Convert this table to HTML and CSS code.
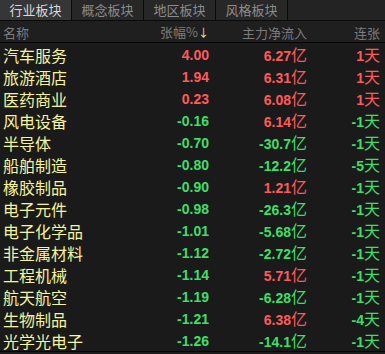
FILE: index.html
```html
<!DOCTYPE html>
<html lang="zh">
<head>
<meta charset="utf-8">
<link rel="stylesheet" href="styles.css">
</head>
<body>
<div class="app">
  <div class="tabs">
    <div class="tab active">行业板块</div>
    <div class="tab">概念板块</div>
    <div class="tab">地区板块</div>
    <div class="tab">风格板块</div>
  </div>
  <div class="row head">
    <div class="name">名称</div>
    <div class="num">张幅%<span class="arrow">↓</span></div>
    <div class="num">主力净流入</div>
    <div class="num">连张</div>
  </div>
  <div class="list">
    <div class="row"><div class="name">汽车服务</div><div class="num up">4.00</div><div class="num up">6.27<span class="cn">亿</span></div><div class="num up">1<span class="cn">天</span></div></div>
    <div class="row"><div class="name">旅游酒店</div><div class="num up">1.94</div><div class="num up">6.31<span class="cn">亿</span></div><div class="num up">1<span class="cn">天</span></div></div>
    <div class="row"><div class="name">医药商业</div><div class="num up">0.23</div><div class="num up">6.08<span class="cn">亿</span></div><div class="num up">1<span class="cn">天</span></div></div>
    <div class="row"><div class="name">风电设备</div><div class="num down">-0.16</div><div class="num up">6.14<span class="cn">亿</span></div><div class="num down">-1<span class="cn">天</span></div></div>
    <div class="row"><div class="name">半导体</div><div class="num down">-0.70</div><div class="num down">-30.7<span class="cn">亿</span></div><div class="num down">-1<span class="cn">天</span></div></div>
    <div class="row"><div class="name">船舶制造</div><div class="num down">-0.80</div><div class="num down">-12.2<span class="cn">亿</span></div><div class="num down">-5<span class="cn">天</span></div></div>
    <div class="row"><div class="name">橡胶制品</div><div class="num down">-0.90</div><div class="num up">1.21<span class="cn">亿</span></div><div class="num down">-1<span class="cn">天</span></div></div>
    <div class="row"><div class="name">电子元件</div><div class="num down">-0.98</div><div class="num down">-26.3<span class="cn">亿</span></div><div class="num down">-1<span class="cn">天</span></div></div>
    <div class="row"><div class="name">电子化学品</div><div class="num down">-1.01</div><div class="num down">-5.68<span class="cn">亿</span></div><div class="num down">-1<span class="cn">天</span></div></div>
    <div class="row"><div class="name">非金属材料</div><div class="num down">-1.12</div><div class="num down">-2.72<span class="cn">亿</span></div><div class="num down">-1<span class="cn">天</span></div></div>
    <div class="row"><div class="name">工程机械</div><div class="num down">-1.14</div><div class="num up">5.71<span class="cn">亿</span></div><div class="num down">-1<span class="cn">天</span></div></div>
    <div class="row"><div class="name">航天航空</div><div class="num down">-1.19</div><div class="num down">-6.28<span class="cn">亿</span></div><div class="num down">-1<span class="cn">天</span></div></div>
    <div class="row"><div class="name">生物制品</div><div class="num down">-1.21</div><div class="num up">6.38<span class="cn">亿</span></div><div class="num down">-4<span class="cn">天</span></div></div>
    <div class="row"><div class="name">光学光电子</div><div class="num down">-1.26</div><div class="num down">-14.1<span class="cn">亿</span></div><div class="num down">-1<span class="cn">天</span></div></div>
  </div>
  <div class="foot"></div>
</div>
</body>
</html>
```
FILE: styles.css
```css
html, body {
  margin: 0;
  padding: 0;
  background: #1a1a1a;
}
.app {
  width: 385px;
  height: 354px;
  overflow: hidden;
  background: #1a1a1a;
  font-family: "Noto Sans CJK SC", "Noto Sans", sans-serif;
}
.tabs {
  display: flex;
  height: 20px;
  background: #232323;
  border-bottom: 1px solid #0a0a0a;
}
.tab {
  width: 71px;
  border-right: 1px solid #0a0a0a;
  display: flex;
  align-items: center;
  justify-content: center;
  font-size: 13px;
  line-height: 20px;
  color: #8c8c8c;
  background: #272727;
}
.tab.active {
  background: #363636;
  color: #dadada;
}
.row {
  display: grid;
  grid-template-columns: 130px 76px 98px 73px;
  padding: 0 5px 0 3px;
  height: 22px;
  line-height: 22px;
  align-items: center;
}
.head {
  height: 21px;
  line-height: 21px;
  background: #1f1f1f;
  border-bottom: 1px solid #050505;
  color: #7c7c7c;
  font-size: 13px;
}
.head .num {
  font-family: "Noto Sans CJK SC", sans-serif;
  font-weight: normal;
  font-size: 13px;
}
.arrow {
  color: #f2f29a;
  font-size: 11px;
}
.name {
  white-space: nowrap;
}
.list .name {
  color: #f5f59c;
  font-size: 16px;
}
.num {
  text-align: right;
  white-space: nowrap;
  font-family: "Liberation Sans", Arial, sans-serif;
  font-weight: bold;
  font-size: 14px;
}
.cn {
  font-family: "Noto Sans CJK SC", sans-serif;
  font-weight: normal;
  font-size: 16px;
}
.up { color: #ff5a5a; }
.down { color: #3ede6a; }
.foot {
  border-top: 1px solid #050505;
  height: 3px;
  background: #1c1c1c;
}
```
